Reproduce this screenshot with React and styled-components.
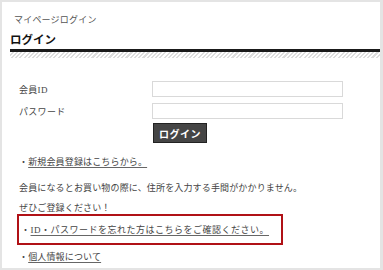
import React from 'react'
import styled, { createGlobalStyle } from 'styled-components'

const GlobalStyle = createGlobalStyle`
  html, body {
    margin: 0;
    padding: 0;
    background: #fff;
  }
  body {
    font-family: "Liberation Serif", "Noto Sans CJK JP", serif;
    color: #444;
  }
`

const Frame = styled.div`
  box-sizing: border-box;
  width: 383px;
  height: 270px;
  border: 2px solid #e4e4e4;
  border-right-width: 3px;
  background: #fff;
  overflow: hidden;
`

const Crumb = styled.div`
  font-size: 9px;
  letter-spacing: 0.2px;
  color: #555;
  padding: 13px 0 0 12px;
  line-height: 11px;
`

const Heading = styled.h1`
  margin: 7px 0 0 8px;
  font-size: 11.5px;
  font-weight: bold;
  color: #111;
  line-height: 14px;
  padding-bottom: 2px;
  border-bottom: 3px solid #1a1a1a;
`

const Hatch = styled.div`
  margin-left: 8px;
  height: 6px;
  background: repeating-linear-gradient(
    135deg,
    #fff 0px,
    #fff 1.5px,
    #ddd 1.5px,
    #ddd 3px
  );
`

const Form = styled.div`
  display: grid;
  grid-template-columns: 133px 191px;
  row-gap: 6px;
  margin: 23px 0 0 17px;
  align-items: center;
`

const Label = styled.label`
  font-size: 9px;
  letter-spacing: 0.3px;
  color: #444;
`

const Input = styled.input`
  box-sizing: border-box;
  width: 191px;
  height: 16px;
  border: 1px solid #d9d9d9;
  margin: 0;
  padding: 0;
`

const Button = styled.button`
  grid-column: 2;
  justify-self: start;
  margin: -2px 0 0 1px;
  width: 54px;
  height: 20px;
  border: 1px solid #222;
  background: #454545;
  color: #fff;
  font-family: "Noto Sans CJK JP", sans-serif;
  font-weight: bold;
  font-size: 10px;
  letter-spacing: 0.5px;
  padding: 0;
  cursor: pointer;
`

const Line = styled.p`
  margin: ${p => p.$top || 0}px 0 0 17px;
  font-size: 9px;
  letter-spacing: 0.15px;
  line-height: 12px;
  color: #444;
`

const LinkText = styled.a`
  color: #444;
  text-decoration: underline;
  text-underline-offset: 2px;
  text-decoration-color: #666;
`

const Notice = styled.div`
  box-sizing: border-box;
  width: 266px;
  height: 31px;
  margin: 0 0 0 15px;
  border: 2px solid #b01116;
  display: flex;
  align-items: center;
  padding-left: 2px;
  font-size: 9px;
  letter-spacing: 0.5px;
`

const App = () => (
  <>
    <GlobalStyle />
    <Frame>
      <Crumb>マイページログイン</Crumb>
      <Heading>ログイン</Heading>
      <Hatch />
      <Form>
        <Label>会員ID</Label>
        <Input type='text' />
        <Label>パスワード</Label>
        <Input type='password' />
        <Button>ログイン</Button>
      </Form>
      <Line $top={13}>・<LinkText href='#'>新規会員登録はこちらから。</LinkText></Line>
      <Line $top={14}>会員になるとお買い物の際に、住所を入力する手間がかかりません。</Line>
      <Line $top={8}>ぜひご登録ください！</Line>
      <Notice>・<LinkText href='#'>ID・パスワードを忘れた方はこちらをご確認ください。</LinkText></Notice>
      <Line $top={6}>・<LinkText href='#'>個人情報について</LinkText></Line>
    </Frame>
  </>
)

export default App
